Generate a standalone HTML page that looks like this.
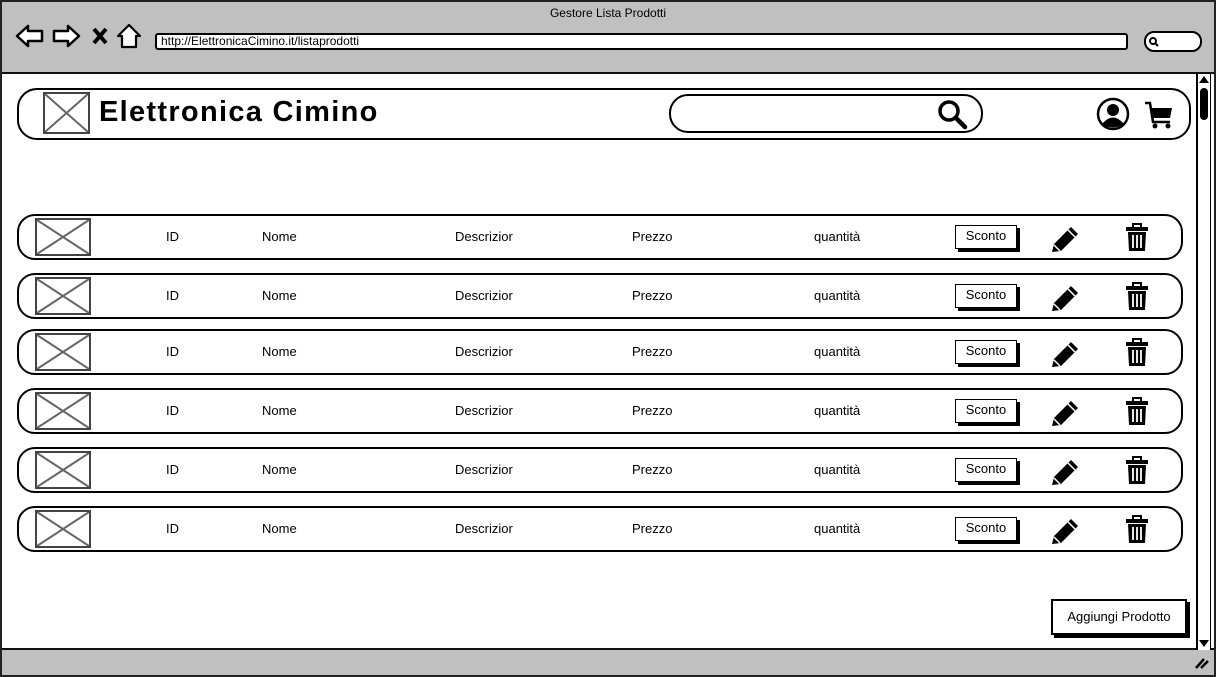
<!DOCTYPE html>
<html><head><meta charset="utf-8"><style>
*{box-sizing:border-box;margin:0;padding:0}
body{width:1216px;height:677px;overflow:hidden;background:#fff;font-family:"Liberation Sans",sans-serif;position:relative;color:#000}
.a{position:absolute}
.row{position:absolute;left:17px;width:1166px;height:46px;border:2px solid #000;border-radius:18px}
.row .t{position:absolute;top:13px;font-size:13px}
.img{position:absolute;border:2px solid #444;background:#fff}
.btn{position:absolute;left:936px;top:9px;width:62px;height:24px;border:1.5px solid #000;box-shadow:3px 3px 0 #000;font-size:13px;text-align:center;line-height:20px;background:#fff}
</style></head><body>
<div class="a" style="left:0;top:0;width:1216px;height:677px;border:2px solid #222;background:#c0c0c0"></div>
<div class="a" style="left:2px;top:72px;width:1212px;height:578px;background:#fff;border-top:2px solid #111;border-bottom:2px solid #111"></div>
<div class="a" style="left:0;top:6px;width:1216px;text-align:center;font-size:12px">Gestore Lista Prodotti</div>
<svg class="a" style="left:14px;top:22px" width="130" height="28" viewBox="0 0 130 28">
<path d="M3 14 L14 4 L14 9 L28 9 L28 19 L14 19 L14 24 Z" fill="#fff" stroke="#000" stroke-width="2.5" stroke-linejoin="round"/>
<path d="M65 14 L54 4 L54 9 L40 9 L40 19 L54 19 L54 24 Z" fill="#fff" stroke="#000" stroke-width="2.5" stroke-linejoin="round"/>
<path d="M80 7 L92 21 M92 7 L80 21" stroke="#000" stroke-width="4"/>
<path d="M115 3 L104 14 L108 14 L108 25 L122 25 L122 14 L126 14 Z" fill="#fff" stroke="#000" stroke-width="2.2" stroke-linejoin="round"/>
</svg>
<div class="a" style="left:155px;top:33px;width:973px;height:17px;border:2px solid #000;border-radius:3px;background:#fff;font-size:12px;line-height:13px;padding-left:4px">http://ElettronicaCimino.it/listaprodotti</div>
<div class="a" style="left:1144px;top:31px;width:58px;height:21px;border:2px solid #000;border-radius:10px;background:#fff"></div>
<svg class="a" style="left:1148px;top:36px" width="12" height="12"><circle cx="5" cy="5" r="3" fill="none" stroke="#000" stroke-width="2"/><path d="M7 7 L10 10" stroke="#000" stroke-width="2"/></svg>
<div class="a" style="left:1196px;top:74px;width:15px;height:576px;border-left:2px solid #000;border-right:1px solid #000;background:#fff"></div>
<div class="a" style="left:1200px;top:88px;width:8px;height:32px;background:#000;border-radius:4px"></div>
<div class="a" style="left:1199px;top:76px;width:0;height:0;border-left:5px solid transparent;border-right:5px solid transparent;border-bottom:7px solid #000"></div>
<div class="a" style="left:1199px;top:640px;width:0;height:0;border-left:5px solid transparent;border-right:5px solid transparent;border-top:7px solid #000"></div>
<svg class="a" style="left:1194px;top:656px" width="16" height="14"><path d="M2 12 L10 3 M7 12 L14 5" stroke="#000" stroke-width="2.5"/></svg>
<div class="a" style="left:17px;top:88px;width:1174px;height:52px;border:2px solid #000;border-radius:20px"></div>
<div class="img" style="left:43px;top:92px;width:47px;height:42px"><svg width="43" height="38" style="display:block"><path d="M0 0 L43 38 M43 0 L0 38" stroke="#666" stroke-width="2"/></svg></div>
<div class="a" style="left:99px;top:96px;font-size:29px;font-weight:bold;letter-spacing:1.3px">Elettronica Cimino</div>
<div class="a" style="left:669px;top:94px;width:314px;height:39px;border:2px solid #000;border-radius:19px"></div>
<svg class="a" style="left:936px;top:98px" width="32" height="32"><circle cx="13" cy="13" r="9" fill="none" stroke="#000" stroke-width="3.5"/><path d="M20 20 L29 29" stroke="#000" stroke-width="4.5" stroke-linecap="round"/></svg>
<svg class="a" style="left:1096px;top:97px" width="34" height="34"><circle cx="17" cy="17" r="15" fill="#fff" stroke="#000" stroke-width="2.5"/><circle cx="17" cy="13" r="6" fill="#000"/><path d="M6 27 Q17 14 28 27 Q17 34 6 27Z" fill="#000"/></svg>
<svg class="a" style="left:1143px;top:100px" width="32" height="30"><path d="M2 3 L7 3 L10 22 L27 22" fill="none" stroke="#000" stroke-width="2.5"/><path d="M8 8 L29 8 L27 18 L10 18 Z" fill="#000"/><circle cx="12" cy="26" r="2.5" fill="#000"/><circle cx="25" cy="26" r="2.5" fill="#000"/></svg>
<div id="rows"></div>
<script>
var ys=[214,273,329,388,447,506],h='';
ys.forEach(function(y){h+='<div class="row" style="top:'+y+'px">'+
'<div class="img" style="left:16px;top:2px;width:56px;height:38px"><svg width="52" height="34" style="display:block"><path d="M0 0 L52 34 M52 0 L0 34" stroke="#666" stroke-width="2"/></svg></div>'+
'<div class="t" style="left:147px">ID</div><div class="t" style="left:243px">Nome</div><div class="t" style="left:436px">Descrizior</div><div class="t" style="left:613px">Prezzo</div><div class="t" style="left:795px">quantità</div>'+
'<div class="btn">Sconto</div>'+
'<svg class="a" style="left:1031px;top:8px" width="30" height="30"><path d="M2 28 L4 20 L21 3 L28 10 L11 27 Z" fill="#000"/><path d="M4 21 L10 27" stroke="#fff" stroke-width="1.5"/><path d="M18 6 L25 13" stroke="#fff" stroke-width="1.5"/></svg>'+
'<svg class="a" style="left:1105px;top:7px" width="26" height="30"><path d="M9 4 L9 1 L17 1 L17 4" fill="none" stroke="#000" stroke-width="2"/><rect x="2" y="4" width="22" height="4" fill="#000"/><path d="M4 9 L22 9 L21 28 L5 28 Z" fill="#000"/><path d="M9 12 V25 M13 12 V25 M17 12 V25" stroke="#fff" stroke-width="1.8"/></svg>'+
'</div>';});
document.getElementById('rows').innerHTML=h;
</script>
<div class="a" style="left:1051px;top:599px;width:136px;height:36px;border:2px solid #000;box-shadow:3px 3px 0 #000;background:#fff;font-size:13px;text-align:center;line-height:32px">Aggiungi Prodotto</div>
</body></html>
